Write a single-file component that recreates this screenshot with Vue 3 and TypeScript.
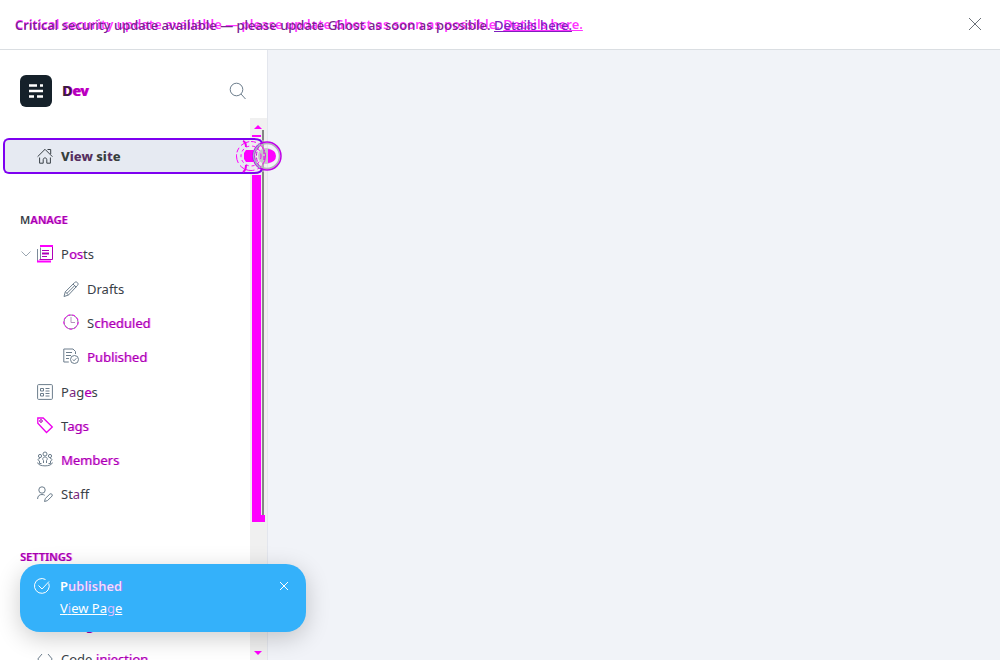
<script setup lang="ts">
import { ref } from 'vue'

type Item = { id: string; icon: string; parts: [string, string][]; sub?: boolean; open?: boolean }

const manage: Item[] = [
  { id: 'posts', icon: 'posts', parts: [['P', ''], ['os', 'changed'], ['ts', '']], open: true },
  { id: 'drafts', icon: 'pencil', parts: [['Drafts', '']], sub: true },
  { id: 'scheduled', icon: 'clock', parts: [['S', ''], ['cheduled', 'changed']], sub: true },
  { id: 'published', icon: 'published', parts: [['Published', 'changed']], sub: true },
  { id: 'pages', icon: 'pages', parts: [['P', ''], ['a', 'soft'], ['g', ''], ['e', 'changed'], ['s', '']] },
  { id: 'tags', icon: 'tag', parts: [['T', ''], ['ags', 'changed']] },
  { id: 'members', icon: 'members', parts: [['Members', 'changed']] },
  { id: 'staff', icon: 'staff', parts: [['St', ''], ['a', 'soft'], ['ff', '']] },
]
const settings: Item[] = [
  { id: 'general', icon: 'gear', parts: [['General', '']] },
  { id: 'integrations', icon: 'gear', parts: [['Integrations', 'changed']] },
  { id: 'code', icon: 'code', parts: [['Code ', ''], ['injection', 'changed']] },
]
const bannerLayers = ['overlay', 'base']

const icons: Record<string, string> = {
  posts: '<path stroke="#7c8b9a" d="M.5 3v12M3.500 1.500V13"/><path stroke="#f0f" stroke-width="2" d="M3 0h13M0 15.500h14"/><path stroke="#b000b8" d="M15.500 1v12.500H2.500M5 4.500h7M5 10.500h5"/><path stroke="#b000b8" stroke-width="2" d="M5 7.500h7"/>',
  pencil: '<path d="M1 15.500l1.300-4.700L11.500 1.600c.9-.9 2-.9 2.900 0s.9 2 0 2.900L5.500 14zM2.300 10.800l3.200 3.100M10 3l3.200 3.200M4 12.300l7.500-7.500"/>',
  clock: '<circle cx="8" cy="7" r="7" stroke="#81778f"/><circle cx="8" cy="7" r="7.200" stroke="#f0f" stroke-dasharray="3 2"/><path d="M8 2v5.500h4" stroke="#b493bd"/>',
  published: '<path d="M12.500 5V2.500L10 0H.8v13h5M3 3.500h6M3 6.500h5M3 9.500h3"/><circle cx="11.500" cy="10.500" r="4"/><path d="M9.800 10.500l1.200 1.300 2.300-2.500"/>',
  pages: '<rect x=".6" y=".6" width="14.800" height="14.800" rx="1"/><path d="M3.500 4.500h3v2.500h-3zM3.500 9.500h3V12h-3zM8.500 4.500h4M8.500 7h4M8.500 9.500h4M8.500 12h4"/>',
  tag: '<path stroke="#ed00ee" stroke-width="1.300" d="M.8 0v5.200l8.700 9.300L15.300 9 6.200 0z"/><circle cx="4" cy="3" r="1.300" stroke="#a000ab"/>',
  members: '<circle cx="8" cy="2" r="2"/><circle cx="3" cy="4" r="1.600"/><circle cx="13" cy="4" r="1.600"/><path d="M6.500 11V8.500C5.200 7.500 5.500 5 8 5s2.800 2.500 1.500 3.500V11M4.500 11.500h-2V9C.2 8.500.6 6.500 3 6.500M11.500 11.500h2V9c2.300-.5 1.900-2.500-.5-2.500M.6 10.500c.5 4.500 14.300 4.500 14.800 0"/>',
  staff: '<circle cx="5" cy="4" r="3.200"/><path d="M.6 13c0-3 1.800-4.500 4.400-4.500 1.200 0 2 .3 2.700.8M7.500 15.500l.8-3 4.600-4.500c1.300-1 3.100.7 2.200 2l-4.600 4.600z"/>',
  gear: '<circle cx="8" cy="8" r="6"/><circle cx="8" cy="8" r="2"/>',
  code: '<path d="M5 3L.8 8 5 13M11 3l4.200 5L11 13"/>',
  home: '<path d="M.6 8.700L8 1.300l7.400 7.400M2.600 9.500v5.700h3.600v-3.500c0-2.400 3.600-2.400 3.600 0v3.500h3.600V9.500M10.500 1.500h3.200v4.500"/>',
}
const toastOpen = ref(true)
const bannerOpen = ref(true)
</script>

<template>
  <div class="page">
    <header v-if="bannerOpen" class="banner">
      <div class="message">
        <p v-for="layer in bannerLayers" :key="layer" :class="layer" :aria-hidden="layer === 'overlay'">
          Critical security update available — please update Ghost as soon as possible. <a href="#update">Details here.</a>
        </p>
      </div>
      <button class="close" type="button" aria-label="Close banner" @click="bannerOpen = false">
        <svg width="14" height="14" viewBox="0 0 14 14"><path d="M1 0l12 12M13 0L1 12" /></svg>
      </button>
    </header>
    <div class="body">
      <aside class="sidebar">
        <div class="brand">
          <svg width="32" height="32" viewBox="0 0 32 32" aria-hidden="true">
            <rect width="32" height="32" rx="6" fill="#15212a" />
            <path d="M9 10.500h8M20 10.500h3M9 16h14M9 21.500h5M17 21.500h6" stroke="#fff" stroke-width="2.500" />
          </svg>
          <strong>D<span>ev</span></strong>
          <button type="button" aria-label="Search">
            <svg class="icon" width="17" height="17" viewBox="0 0 17 17"><circle cx="7.500" cy="6.500" r="6.300" /><path d="M12 11l4.500 5" /></svg>
          </button>
        </div>
        <div class="scroll">
          <nav>
            <a class="row view" href="#site">
              <svg class="icon" width="16" height="16" viewBox="0 0 16 16" v-html="icons.home"></svg>
              <span>V<i>iew</i> si<i>t</i>e</span>
            </a>
            <h2>M<span class="changed">ANAGE</span></h2>
            <a v-for="item in manage" :key="item.id" class="row" :class="[item.id, { sub: item.sub }]" :href="'#' + item.id">
              <svg v-if="item.open" class="chevron" width="10" height="6" viewBox="0 0 10 6"><path d="M.5 .5L5 5l4.500-4.500" /></svg>
              <svg class="icon" width="16" height="16" viewBox="0 0 16 16" v-html="icons[item.icon]"></svg>
              <span class="label"><span v-for="(p, i) in item.parts" :key="i" :class="p[1]">{{ p[0] }}</span></span>
            </a>
            <h2><span class="changed">SETTINGS</span></h2>
            <a v-for="item in settings" :key="item.id" class="row" :href="'#' + item.id">
              <svg class="icon" width="16" height="16" viewBox="0 0 16 16" v-html="icons[item.icon]"></svg>
              <span class="label"><span v-for="(p, i) in item.parts" :key="i" :class="p[1]">{{ p[0] }}</span></span>
            </a>
          </nav>
          <div class="track" aria-hidden="true">
            <i class="arrow up"></i><i class="cap"></i><i class="thumb"></i><i class="line"></i><i class="arrow down"></i>
          </div>
          <svg class="rings" width="50" height="36" viewBox="0 0 50 36" aria-hidden="true" fill="none">
            <rect x="16" y="2" width="15" height="32" fill="#eeeeef" />
            <path d="M0 1h20q8 0 8 5M0 35h20q8 0 8-5" stroke="#7e00f0" stroke-width="2" />
            <path d="M9 3q3 1 3 6M12 27q0 5-3 7" stroke="#e0e" stroke-width="2" />
            <path d="M29 0v36" stroke="#858585" stroke-width="2" opacity=".6" />
            <circle cx="33" cy="18" r="12.500" stroke="#b3b3ba" stroke-width="1.500" />
            <circle cx="32" cy="18" r="8" fill="#c3c5c9" />
            <path d="M12 12h7l2 3v6l-2 3h-7l-2-3v-6zM34 11q8 1 8 7t-8 7z" fill="#f0f" />
            <circle cx="17" cy="18" r="14.500" stroke="#f0f" stroke-dasharray="9 2 5 3" />
            <circle cx="33" cy="18" r="14" stroke="#c000e8" stroke-width="1.500" />
            <circle cx="17" cy="18" r="10" stroke="#f0f" stroke-dasharray="3 3" />
            <path d="M22 12q-3 6 0 12M25 8q-5 10 0 20M30 12v12" stroke="#d000e0" stroke-dasharray="4 2" />
            <path d="M26 6q-13 12 0 24" stroke="#9db1c9" stroke-width="1.500" />
          </svg>
        </div>
      </aside>
      <main></main>
    </div>
    <section v-if="toastOpen" class="toast" role="status">
      <svg width="16" height="16" viewBox="0 0 16 16" aria-hidden="true"><path d="M14.800 5.400A7.400 7.400 0 1 1 11.500 1.500M4.500 7.500l3.500 3.500 7-7.500" /></svg>
      <div><strong>P<span>ublished</span></strong><a href="#view">V<span>i</span>ew Pa<span>g</span>e</a></div>
      <button type="button" aria-label="Close notification" @click="toastOpen = false">
        <svg width="8" height="8" viewBox="0 0 8 8"><path d="M0 0l8 8M8 0L0 8" /></svg>
      </button>
    </section>
  </div>
</template>

<style>
body { margin: 0; overflow: hidden; }
</style>

<style scoped>
* { box-sizing: border-box; }
.page { height: 100vh; display: flex; flex-direction: column; font: 13px/20px "Noto Sans", "Open Sans", sans-serif; color: #394047; background: #f1f3f8; }
button { border: 0; padding: 0; background: none; display: flex; cursor: pointer; }
a { color: inherit; text-decoration: none; }
.banner { height: 50px; flex: none; display: flex; align-items: center; justify-content: space-between; padding: 0 18px 0 15px; background: #fff; border-bottom: 1px solid #dadee2; }
.message { display: grid; white-space: nowrap; }
.message p { grid-area: 1 / 1; margin: 0; }
.message a { text-decoration: underline; }
.message .base { padding-top: 1px; font-weight: 500; color: #7a2290; }
.message .base a { color: #7d20bd; }
.message .overlay { font-weight: 600; color: rgba(255, 0, 255, 0.8); }
.close svg { stroke: #6b7178; fill: none; }
.body { display: flex; flex: 1; min-height: 0; }
.sidebar { width: 268px; flex: none; background: #fff; border-right: 1px solid #e3e6ed; display: flex; flex-direction: column; }
main { flex: 1; }
.brand { height: 68px; flex: none; padding: 14px 21px 0 20px; display: flex; align-items: center; gap: 10px; }
.brand strong { flex: 1; font-size: 14px; color: #38203c; text-shadow: 1px 0 #d0d; }
.brand strong span { color: #b400b8; }
.icon { flex: none; fill: none; stroke: #6c7d8c; stroke-width: 1; overflow: visible; }
.scroll { display: flex; flex: 1; min-height: 0; position: relative; clip-path: inset(0 -20px 0 0); }
nav { flex: 1; min-width: 0; padding-top: 20px; }
.row { display: flex; align-items: center; height: 34px; padding-left: 37px; gap: 8px; white-space: nowrap; position: relative; }
.row.sub { padding-left: 63px; }
.row.drafts, .row.pages { margin-top: 1px; }
.view { height: 36px; margin-left: 3px; padding-left: 32px; background: #e6eaf2; border: 2px solid #7e00f0; border-right: 0; border-radius: 6px 0 0 6px; font-weight: 800; color: #36403c; }
.view .icon { stroke: #394047; }
.view i { font-style: normal; color: #562f60; }
h2 { margin: 36px 0 7px; padding-left: 20px; font-size: 11px; line-height: 20px; font-weight: 600; }
.changed { color: #a600ad; text-shadow: 1px 0 rgba(255, 0, 255, 0.5); }
.soft { color: #7b287f; }
.chevron { position: absolute; left: 21px; fill: none; stroke: #9ba6b1; }
.track { width: 17px; flex: none; background: #f0f0f0; position: relative; }
.track i { position: absolute; }
.arrow { left: 4px; border: 4px solid transparent; }
.up { top: 3px; border-bottom-color: #f0f; }
.down { bottom: 1px; border-top-color: #f0f; }
.cap { left: 2px; top: 17px; width: 9px; height: 2px; background: #f0f; }
.thumb { left: 2px; top: 57px; width: 13px; height: 347px; background: #f0f; }
.line { left: 12px; top: 12px; width: 5px; height: 385px; background: #f0f0f0; border-left: 2px solid #858585; box-shadow: -1px 0 #eee; }
.rings { position: absolute; left: 234px; top: 20px; overflow: visible; }
.toast { position: absolute; left: 20px; bottom: 28px; width: 286px; min-height: 68px; padding: 12px 18px 12px 14px; display: flex; align-items: flex-start; gap: 10px; color: #fff; background: #34b1fa; border-radius: 20px; box-shadow: 0 6px 24px rgba(0, 0, 0, 0.2); }
.toast svg { fill: none; stroke: #fff; overflow: visible; }
.toast > svg { margin-top: 2px; }
.toast > div { flex: 1; display: flex; flex-direction: column; gap: 2px; }
.toast strong { font-weight: 600; }
.toast strong span { color: #eddfff; text-shadow: 1px 0 rgba(166, 60, 240, 0.5); }
.toast a { align-self: flex-start; text-decoration: underline; }
.toast a span { color: #d9b9ff; }
.toast button { margin-top: 6px; }
</style>
